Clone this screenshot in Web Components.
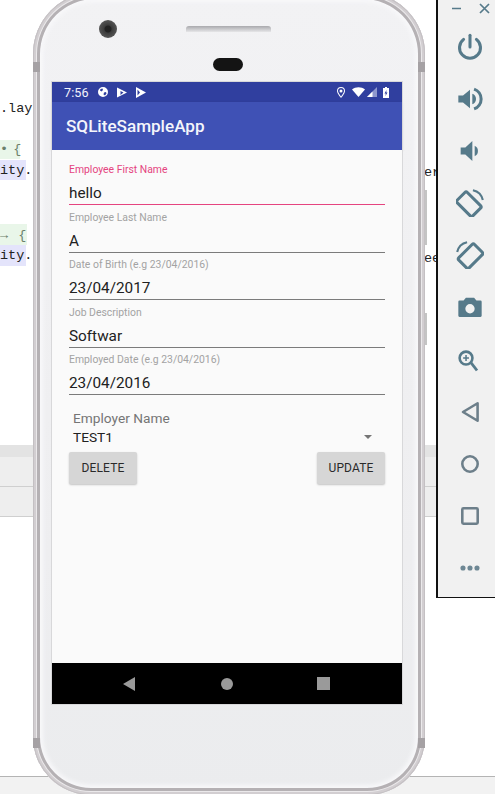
<!DOCTYPE html>
<html>
<head>
<meta charset="utf-8">
<title>SQLiteSampleApp</title>
<style>
html, body { margin: 0; padding: 0; background: #fff; }
body { width: 495px; height: 794px; overflow: hidden; font-family: Roboto, sans-serif; position: relative; }
</style>
</head>
<body>
<ide-backdrop></ide-backdrop>
<phone-frame>
    <status-bar></status-bar>
    <app-bar>SQLiteSampleApp</app-bar>
    <employee-form>
        <text-field label="Employee First Name" value="hello" focused></text-field>
        <text-field label="Employee Last Name" value="A"></text-field>
        <text-field label="Date of Birth (e.g 23/04/2016)" value="23/04/2017"></text-field>
        <text-field label="Job Description" value="Softwar"></text-field>
        <text-field label="Employed Date (e.g 23/04/2016)" value="23/04/2016"></text-field>
        <spinner-field label="Employer Name" value="TEST1"></spinner-field>
        <div slot="actions" style="display:flex;justify-content:space-between">
            <flat-button>DELETE</flat-button>
            <flat-button>UPDATE</flat-button>
        </div>
    </employee-form>
    <nav-bar></nav-bar>
</phone-frame>
<emulator-toolbar></emulator-toolbar>

<script>
class ideBackdrop extends HTMLElement {
    constructor(){
        super()
        this.shadowDOM = this.attachShadow({mode : 'open'})
    }

    connectedCallback(){
        this.shadowDOM.innerHTML = `
        <style>
            :host { position: absolute; left: 0; top: 0; width: 495px; height: 794px; display: block; background: #fff; overflow: hidden; }
            .code { position: absolute; font: 13.5px/18px "Liberation Mono", monospace; color: #222; white-space: pre; }
            .green { background: #e9f6e9; color: #6b806b; line-height: 20px; }
            .lav { background: #e4e4fb; line-height: 22px; }
            .tabs { position: absolute; left: 0; right: 0; top: 445px; }
            .tabs div { height: 29px; background: #eeeeee; border-bottom: 1px solid #cfcfcf; }
            .tabs .head { height: 12px; background: #e3e3e3; border: 0; }
            .foot { position: absolute; left: 0; right: 0; top: 776px; bottom: 0; background: #f2f2f2; border-top: 1px solid #b4b4b4; }
            .thumb { position: absolute; left: 424px; width: 3px; background: #c4c4c4; }
        </style>
        <div class="code" style="left:0;top:100px">.lay</div>
        <div class="code green" style="left:0;top:140px;width:20px;height:19px;word-spacing:-3px">&#8226; {</div>
        <div class="code lav" style="left:0;top:160px;width:26px;height:20px">ity.</div>
        <div class="code green" style="left:0;top:224px;width:27px;height:21px;line-height:24px;word-spacing:2px">&#8594; {</div>
        <div class="code lav" style="left:0;top:245px;width:26px;height:21px">ity.</div>
        <div class="code" style="left:424px;top:164px;width:12px;overflow:hidden">er</div>
        <div class="code" style="left:424px;top:250px;width:12px;overflow:hidden">ee</div>
        <div class="thumb" style="top:190px;height:55px"></div>
        <div class="thumb" style="top:313px;height:32px"></div>
        <div class="tabs"><div class="head"></div><div></div><div></div></div>
        <div class="foot"></div>
        `
    }
}

class phoneFrame extends HTMLElement {
    constructor(){
        super()
        this.shadowDOM = this.attachShadow({mode : 'open'})
    }

    connectedCallback(){
        this.shadowDOM.innerHTML = `
        <style>
            :host { position: absolute; left: 33px; top: -8px; width: 392px; height: 803px; display: block; }
            .body {
                box-sizing: border-box; width: 100%; height: 100%; border-radius: 62px 62px 58px 58px;
                background: linear-gradient(#f2f2f4, #eeeef0 70%, #ebecee);
                box-shadow: inset 0 0 0 1px #c4c0c3, inset 0 0 0 3px #d2ced1, inset 0 0 0 4px #ebe9eb, inset 0 0 0 7px #b5b1b4, inset 0 0 4px 10px #f8f8fa;
                padding: 0 19px; display: flex; flex-direction: column;
            }
            .bezel { height: 90px; flex: none; }
            .row { display: flex; align-items: center; height: 40px; padding: 17px 0 0 47px; }
            .camera { width: 18px; height: 18px; border-radius: 50%; box-sizing: border-box; background: radial-gradient(circle, #222 0 3px, #3c3c3c 4px, #555 9px); }
            .speaker { width: 85px; height: 6px; margin: 0 0 0 69px; border-radius: 3px 3px 0 0; background: linear-gradient(#a9a9ad, #e6e6e8); }
            .pill { width: 30px; height: 13px; border-radius: 7px; background: #141414; margin: 9px auto 0; position: relative; left: -1px; }
            .screen { width: 350px; height: 622px; flex: none; display: flex; flex-direction: column; background: #fafafa; outline: 1px solid #d8d8da; }
            .seam { position: absolute; width: 7px; height: 10px; background: #a5a1a4; }
        </style>
        <div class="body">
            <div class="bezel">
                <div class="row"><div class="camera"></div><div class="speaker"></div></div>
                <div class="pill"></div>
            </div>
            <div class="screen"><slot></slot></div>
        </div>
        <div class="seam" style="left:0;top:70px"></div>
        <div class="seam" style="right:0;top:70px"></div>
        <div class="seam" style="left:0;top:746px"></div>
        <div class="seam" style="right:0;top:746px"></div>
        `
    }
}

class statusBar extends HTMLElement {
    constructor(){
        super()
        this.shadowDOM = this.attachShadow({mode : 'open'})
    }

    connectedCallback(){
        this.shadowDOM.innerHTML = `
        <style>
            :host { display: flex; height: 20px; flex: none; align-items: center; background: #303f9f; color: #f2f3fb; font: 12.6px Roboto, sans-serif; padding: 0 13px 0 12px; }
            svg { display: block; fill: #fff; }
            .time { width: 34px; letter-spacing: .1px; }
            .left { display: flex; align-items: center; gap: 9px; }
            .right { display: flex; align-items: center; margin-left: auto; }
        </style>
        <div class="time">7:56</div>
        <div class="left">
            <svg width="10" height="10" viewBox="0 0 20 20"><path fill-rule="evenodd" d="M10 0a10 10 0 1 0 0 20a10 10 0 0 0 0-20zM5 4l4-1l1 3l-3 3l-3-2zM12 11l4-1l1 3l-3 4l-3-2z"/></svg>
            <svg width="10" height="11" viewBox="0 0 20 22"><path d="M0 1l20 10l-20 10z"/><path d="M7 8l6 3l-6 5z" fill="#303f9f"/></svg>
            <svg width="10" height="11" viewBox="0 0 20 22"><path fill-rule="evenodd" d="M0 0l20 11l-20 11zM3 5v12l5-6z"/></svg>
        </div>
        <div class="right">
            <svg width="8" height="11" viewBox="0 0 16 22" style="margin-right:7px"><path fill-rule="evenodd" d="M8 0a8 8 0 0 0-8 8c0 5 8 14 8 14s8-9 8-14a8 8 0 0 0-8-8zM8 2a6 6 0 0 1 6 6c0 3-4 8-6 11c-2-3-6-8-6-11a6 6 0 0 1 6-6zM8 5a3 3 0 1 0 0 6a3 3 0 0 0 0-6z"/></svg>
            <svg width="13" height="10" viewBox="0 0 26 20" style="margin-right:2px"><path d="M0 5C7-1 19-1 26 5L13 20z"/></svg>
            <svg width="10" height="10" viewBox="0 0 20 20" style="margin-right:6px"><path d="M20 0V20H0z" fill="#8e97cd"/><path d="M11 9V20H0z"/></svg>
            <svg width="6" height="11" viewBox="0 0 12 22"><path fill-rule="evenodd" d="M4 0h4v2h4v20H0V2h4zM7 6L3 13h2.500L5 18l4-7H6.500z"/></svg>
        </div>
        `
    }
}

class appBar extends HTMLElement {
    constructor(){
        super()
        this.shadowDOM = this.attachShadow({mode : 'open'})
    }

    connectedCallback(){
        this.shadowDOM.innerHTML = `
        <style>
            :host { display: flex; height: 48px; flex: none; align-items: center; background: #3f51b5; color: #f4f5fb; font: 500 17.1px Roboto, sans-serif; padding-left: 14px; box-shadow: 0 1px 3px rgba(0,0,0,.12); }
        </style>
        <slot></slot>
        `
    }
}

class employeeForm extends HTMLElement {
    constructor(){
        super()
        this.shadowDOM = this.attachShadow({mode : 'open'})
    }

    connectedCallback(){
        this.shadowDOM.innerHTML = `
        <style>
            :host { display: block; flex: 1; background: #fafafa; padding: 13px 17px 0; }
        </style>
        <slot></slot>
        <slot name="actions"></slot>
        `
    }
}

class textField extends HTMLElement {
    constructor(){
        super()
        this.shadowDOM = this.attachShadow({mode : 'open'})
    }

    connectedCallback(){
        const focused = this.hasAttribute('focused')
        this.shadowDOM.innerHTML = `
        <style>
            :host { display: block; height: 47.5px; box-sizing: border-box; font-family: Roboto, sans-serif; }
            .label { font-size: 10.4px; line-height: 13px; color: ${focused ? '#e5447f' : '#a3a3a3'}; }
            .value { font-size: 15.3px; line-height: 20px; height: 21px; margin-top: 7px; color: #212121; }
            .line { height: 1px; background: ${focused ? '#e5447f' : '#7b7b7b'}; }
        </style>
        <div class="label">${this.getAttribute('label')}</div>
        <div class="value">${this.getAttribute('value')}</div>
        <div class="line"></div>
        `
    }
}

class spinnerField extends HTMLElement {
    constructor(){
        super()
        this.shadowDOM = this.attachShadow({mode : 'open'})
    }

    connectedCallback(){
        this.shadowDOM.innerHTML = `
        <style>
            :host { display: block; padding: 9px 0 0 4px; height: 42px; font-family: Roboto, sans-serif; }
            .label { font-size: 13.7px; line-height: 16px; color: #757575; }
            .value { font-size: 13.7px; line-height: 16px; margin-top: 3px; color: #212121; display: flex; align-items: center; justify-content: space-between; padding-right: 13px; }
            .arrow { width: 0; height: 0; border: 4.500px solid transparent; border-top: 4.500px solid #757575; border-bottom: 0; }
        </style>
        <div class="label">${this.getAttribute('label')}</div>
        <div class="value"><span>${this.getAttribute('value')}</span><span class="arrow"></span></div>
        `
    }
}

class flatButton extends HTMLElement {
    constructor(){
        super()
        this.shadowDOM = this.attachShadow({mode : 'open'})
    }

    connectedCallback(){
        this.shadowDOM.innerHTML = `
        <style>
            :host { display: flex; align-items: center; justify-content: center; width: 68px; height: 32px; background: #d6d6d6; border-radius: 2px; box-shadow: 0 1px 2px rgba(0,0,0,.22); color: #2a2a2a; font: 400 12px Roboto, sans-serif; letter-spacing: .15px; }
        </style>
        <slot></slot>
        `
    }
}

class navBar extends HTMLElement {
    constructor(){
        super()
        this.shadowDOM = this.attachShadow({mode : 'open'})
    }

    connectedCallback(){
        this.shadowDOM.innerHTML = `
        <style>
            :host { display: flex; flex: none; height: 41px; background: #000; align-items: center; padding-left: 71px; }
            svg { display: block; fill: #9a9a9a; }
        </style>
        <svg width="12" height="14" viewBox="0 0 12 14" style="margin-right:86px"><path d="M12 0V14L0 7z"/></svg>
        <svg width="12" height="12" viewBox="0 0 12 12" style="margin-right:84px"><circle cx="6" cy="6" r="6"/></svg>
        <svg width="13" height="13" viewBox="0 0 13 13"><rect width="13" height="13"/></svg>
        `
    }
}

class emulatorToolbar extends HTMLElement {
    constructor(){
        super()
        this.shadowDOM = this.attachShadow({mode : 'open'})
    }

    connectedCallback(){
        const icons = [
            '<path d="M12 2v10" stroke-linecap="round"/><path d="M6.500 5.500a9 9 0 1 0 11 0" stroke-linecap="round"/>',
            '<path class="f" d="M2 9h4l6-5v16l-6-5H2z"/><path class="f" d="M14 7.500a4.800 4.800 0 0 1 0 9z"/><path d="M15.500 3.500a9 9 0 0 1 0 17"/>',
            '<path class="f" d="M4 9h4l6-5.500v17L8 15H4z"/><path class="f" d="M16 7.500a5 5 0 0 1 0 9z"/>',
            '<g transform="rotate(-45 11 13)"><rect x="4.800" y="3.500" width="12.400" height="19" rx="1.500"/></g><path d="M14.500 1a11 11 0 0 1 8.500 8.500" stroke-width="1.800"/>',
            '<g transform="rotate(45 12.500 13)"><rect x="6.300" y="3.500" width="12.400" height="19" rx="1.500"/></g><path d="M1 9.500A11 11 0 0 1 9.500 1" stroke-width="1.800"/>',
            '<path class="f" fill-rule="evenodd" d="M8.500 4h7l2 2.500h3.500a1 1 0 0 1 1 1v12a1 1 0 0 1-1 1H3a1 1 0 0 1-1-1v-12a1 1 0 0 1 1-1h3.500zM12 9.500a4 4 0 1 0 0 8a4 4 0 0 0 0-8z"/>',
            '<circle cx="8.600" cy="10.300" r="5.500" stroke-width="2.200"/><path d="M13 14.500L18 21" stroke-width="2.400"/><path d="M8.600 7.800v5M6.100 10.300h5" stroke-width="1.300"/>',
            '<path class="g" d="M18.500 4.500v15L6 12z" stroke-linejoin="round"/>',
            '<circle class="g" cx="12" cy="12" r="6.600"/>',
            '<rect class="g" x="5.400" y="5.400" width="13.200" height="13.200" rx="1"/>',
            '<circle class="f b" cx="6" cy="12" r="2.200"/><circle class="f b" cx="12" cy="12" r="2.200"/><circle class="f b" cx="18" cy="12" r="2.200"/>'
        ]
        this.shadowDOM.innerHTML = `
        <style>
            :host { position: absolute; left: 436px; top: -1px; width: 59px; height: 599px; box-sizing: border-box; display: flex; flex-direction: column; align-items: center; background: #f1f1f1; border-left: 2px solid #111; border-bottom: 1px solid #111; }
            .top { display: flex; align-self: stretch; justify-content: space-between; align-items: center; height: 19px; padding: 0 5px 0 13px; color: #5f7f8f; flex: none; margin-bottom: 15px; }
            .icons { display: flex; flex-direction: column; gap: 24.1px; padding-left: 6px; }
            svg { display: block; fill: none; stroke: #567a8a; stroke-width: 2.600; }
            .f { fill: #567a8a; stroke: none; }
            .b { fill: #6e8794; }
            .g { stroke: #6d7f8a; stroke-width: 2.200; }
        </style>
        <div class="top">
            <svg width="11" height="11" viewBox="0 0 11 11"><path d="M1 5.500h9" stroke-width="1.500"/></svg>
            <svg width="11" height="11" viewBox="0 0 11 11"><path d="M1 1l9 9M10 1l-9 9" stroke-width="1.700"/></svg>
        </div>
        <div class="icons">
            ${icons.map(i => `<svg width="28" height="28" viewBox="0 0 24 24">${i}</svg>`).join('')}
        </div>
        `
    }
}

customElements.define('ide-backdrop', ideBackdrop)
customElements.define('phone-frame', phoneFrame)
customElements.define('status-bar', statusBar)
customElements.define('app-bar', appBar)
customElements.define('employee-form', employeeForm)
customElements.define('text-field', textField)
customElements.define('spinner-field', spinnerField)
customElements.define('flat-button', flatButton)
customElements.define('nav-bar', navBar)
customElements.define('emulator-toolbar', emulatorToolbar)
</script>
</body>
</html>
